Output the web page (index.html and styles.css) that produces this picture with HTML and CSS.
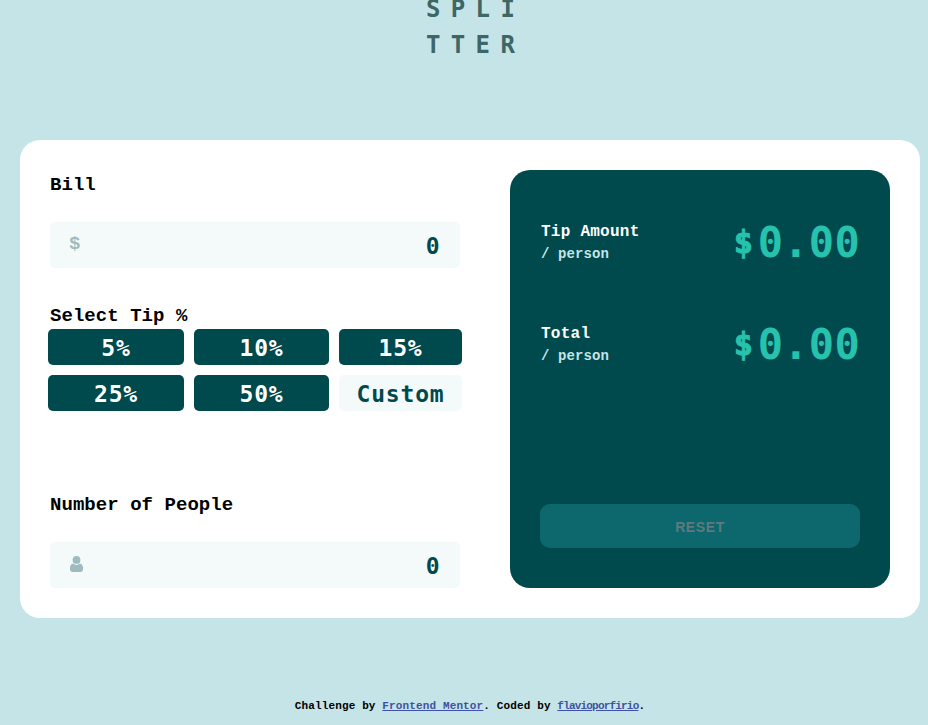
FILE: index.html
```html
<!DOCTYPE html>
<html lang="en">
<head>
<meta charset="utf-8">
<title>Tip calculator</title>
<link rel="stylesheet" href="styles.css">
</head>
<body>
<header class="logo"><div>SPLI</div><div>TTER</div></header>
<main class="card">
  <section class="form">
    <h2 class="label">Bill</h2>
    <div class="field"><span class="dollar">$</span><span class="value">0</span></div>
    <h2 class="label tip-label">Select Tip %</h2>
    <div class="tips">
      <button>5%</button><button>10%</button><button>15%</button>
      <button>25%</button><button>50%</button><button class="custom">Custom</button>
    </div>
    <h2 class="label people-label">Number of People</h2>
    <div class="field">
      <svg class="person" width="13" height="16" viewBox="0 0 13 16"><path fill="#9ebbbd" d="M10 7.500c-1 .9-2.100 1.400-3.500 1.400S4 8.400 3 7.500C1.200 7.900 0 9.600 0 11.500v1.800C0 15 1 16 2.700 16h7.600c1.700 0 2.700-1 2.700-2.700v-1.800c0-1.900-1.200-3.600-3-4z"/><circle cx="6.500" cy="3.900" r="3.900" fill="#9ebbbd"/></svg>
      <span class="value">0</span>
    </div>
  </section>
  <section class="result">
    <div class="row"><div><div class="name">Tip Amount</div><div class="per">/ person</div></div><div class="amount"><span class="sign">$</span>0.00</div></div>
    <div class="row"><div><div class="name">Total</div><div class="per">/ person</div></div><div class="amount"><span class="sign">$</span>0.00</div></div>
    <button class="reset" disabled>RESET</button>
  </section>
</main>
<footer class="credit">Challenge by <a>Frontend Mentor</a>. Coded by <a class="author">flavioporfirio</a>.</footer>
</body>
</html>
```
FILE: styles.css
```css
* { box-sizing: border-box; }
html { background: #c5e4e7; overflow: hidden; }
body { margin: 0; width: 940px; height: 725px; overflow: hidden; font-family: "DejaVu Sans Mono", monospace; font-weight: 700; }
button { border: 0; padding: 0; font: inherit; }
.logo { height: 140px; margin-left: 426px; color: #3d6666; font-size: 24px; letter-spacing: 10.35px; line-height: 36px; display: flex; flex-direction: column; }
.logo div:first-child { height: 27px; line-height: 18px; }
.card { display: flex; justify-content: space-between; width: 900px; height: 478px; margin-left: 20px; padding: 30px; border-radius: 20px; background: #fff; }
.form { width: 410px; }
.label { margin: 0; height: 28px; line-height: 30px; font-family: "Liberation Mono", monospace; font-size: 19px; letter-spacing: .05px; color: #000; }
.field { display: flex; align-items: center; justify-content: space-between; height: 46px; margin-top: 24px; padding: 0 19px 0 20px; border-radius: 5px; background: #f4fafa; }
.dollar { color: #9ebbbd; font-family: "Liberation Mono", monospace; font-size: 19px; line-height: 40px; margin: -2px 0 0 -1px; }
.person { margin-top: -2px; }
.value { color: #00494d; font-size: 23px; line-height: 46px; padding-top: 2px; letter-spacing: 1.3px; }
.tip-label { margin-top: 33px; }
.tips { display: grid; grid-template-columns: 136px 135px 123px; gap: 10px; margin: 0 -2px; }
.tips button { height: 36px; border-radius: 5px; background: #00494d; color: #fff; font-size: 23px; line-height: 36px; padding-top: 1px; letter-spacing: .8px; }
.tips .custom { background: #f4fafa; color: #00494d; }
.people-label { margin-top: 79px; }
.result { display: flex; flex-direction: column; width: 380px; padding: 50px 30px 40px; border-radius: 20px; background: #00494d; }
.row { display: flex; justify-content: space-between; height: 102px; }
.name { height: 23px; line-height: 24px; padding-left: 1px; color: #fff; font-family: "Liberation Mono", monospace; font-size: 16px; letter-spacing: .25px; }
.per { line-height: 23px; padding-left: 1px; color: #c5e4e7; font-family: "Liberation Mono", monospace; font-size: 14px; letter-spacing: .1px; }
.amount { display: flex; height: 44px; line-height: 45px; color: #26c2ae; font-size: 42px; letter-spacing: .3px; }
.sign { width: 24px; font-size: 32px; line-height: 45px; -webkit-text-stroke: 1px #26c2ae; }
.reset { height: 44px; margin-top: auto; padding-top: 1px; border-radius: 10px; background: #0d686d; color: #5e7a7d; font-family: "Liberation Sans", sans-serif; font-size: 14px; font-weight: 700; letter-spacing: .6px; }
.credit { width: 940px; margin-top: 80px; text-align: center; font-family: "Liberation Mono", monospace; font-size: 11px; line-height: 17px; letter-spacing: .13px; color: #000; }
.credit a { color: #3e52a3; text-decoration: underline; }
.credit .author { letter-spacing: -.81px; }
```
